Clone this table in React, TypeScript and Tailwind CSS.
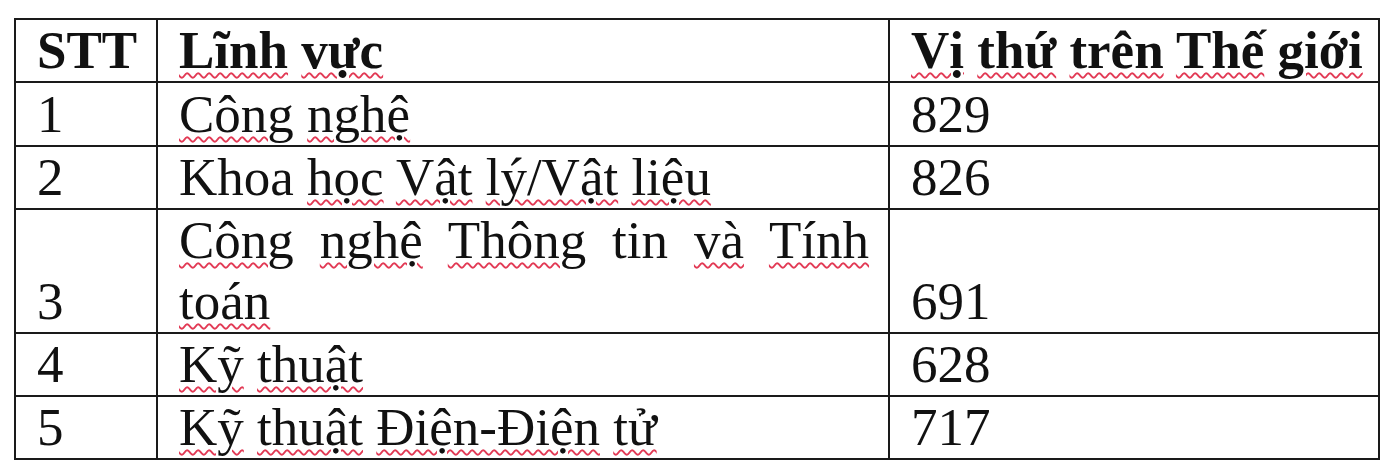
const wavy = "underline decoration-wavy decoration-[#e23a55] decoration-[1.5px] underline-offset-[4px]";

// Spell-check style word: true = red wavy underline
type Word = [string, boolean];

function Words({ words }: { words: Word[] }) {
    return (
        <>
            {words.map(([w, bad], i) => (
                <span key={i}>
                    {i > 0 && " "}
                    <span className={bad ? wavy : ""}>{w}</span>
                </span>
            ))}
        </>
    );
}

const rows: { stt: string; field: Word[]; rank: string; h: string }[] = [
    { stt: "1", field: [["Công", true], ["nghệ", true]], rank: "829", h: "h-[64px]" },
    { stt: "2", field: [["Khoa", false], ["học", true], ["Vật", true], ["lý/Vật", true], ["liệu", true]], rank: "826", h: "h-[62px]" },
    { stt: "3", field: [["Công", true], ["nghệ", true], ["Thông", true], ["tin", false], ["và", true], ["Tính", true], ["toán", true]], rank: "691", h: "h-[124px]" },
    { stt: "4", field: [["Kỹ", true], ["thuật", true]], rank: "628", h: "h-[62px]" },
    { stt: "5", field: [["Kỹ", true], ["thuật", true], ["Điện-Điện", true], ["tử", true]], rank: "717", h: "h-[63px]" },
];

const cell = "border-2 border-[#1a1a1a] align-bottom px-[21px] py-0";

export default function App() {
    return (
        <div className="w-[1390px] h-[467px] overflow-hidden bg-white text-[#111] font-['Liberation_Serif','Times_New_Roman',serif] text-[53px] leading-[61px]">
            <div className="pl-[14px] pt-[18px]">
                <table className="border-collapse table-fixed w-[1364px]">
                    <colgroup>
                        <col className="w-[142px]" />
                        <col className="w-[732px]" />
                        <col className="w-[490px]" />
                    </colgroup>
                    <thead>
                        <tr className="h-[63px] font-bold">
                            <td className={cell}>STT</td>
                            <td className={cell}>
                                <Words words={[["Lĩnh", true], ["vực", true]]} />
                            </td>
                            <td className={cell + " whitespace-nowrap"}>
                                <Words words={[["Vị", true], ["thứ", true], ["trên", true], ["Thế", true], ["giới", true]]} />
                            </td>
                        </tr>
                    </thead>
                    <tbody>
                        {rows.map((r) => (
                            <tr key={r.stt} className={r.h}>
                                <td className={cell}>{r.stt}</td>
                                <td className={cell + " text-justify pr-[19px]"}>
                                    <Words words={r.field} />
                                </td>
                                <td className={cell}>{r.rank}</td>
                            </tr>
                        ))}
                    </tbody>
                </table>
            </div>
        </div>
    );
}
